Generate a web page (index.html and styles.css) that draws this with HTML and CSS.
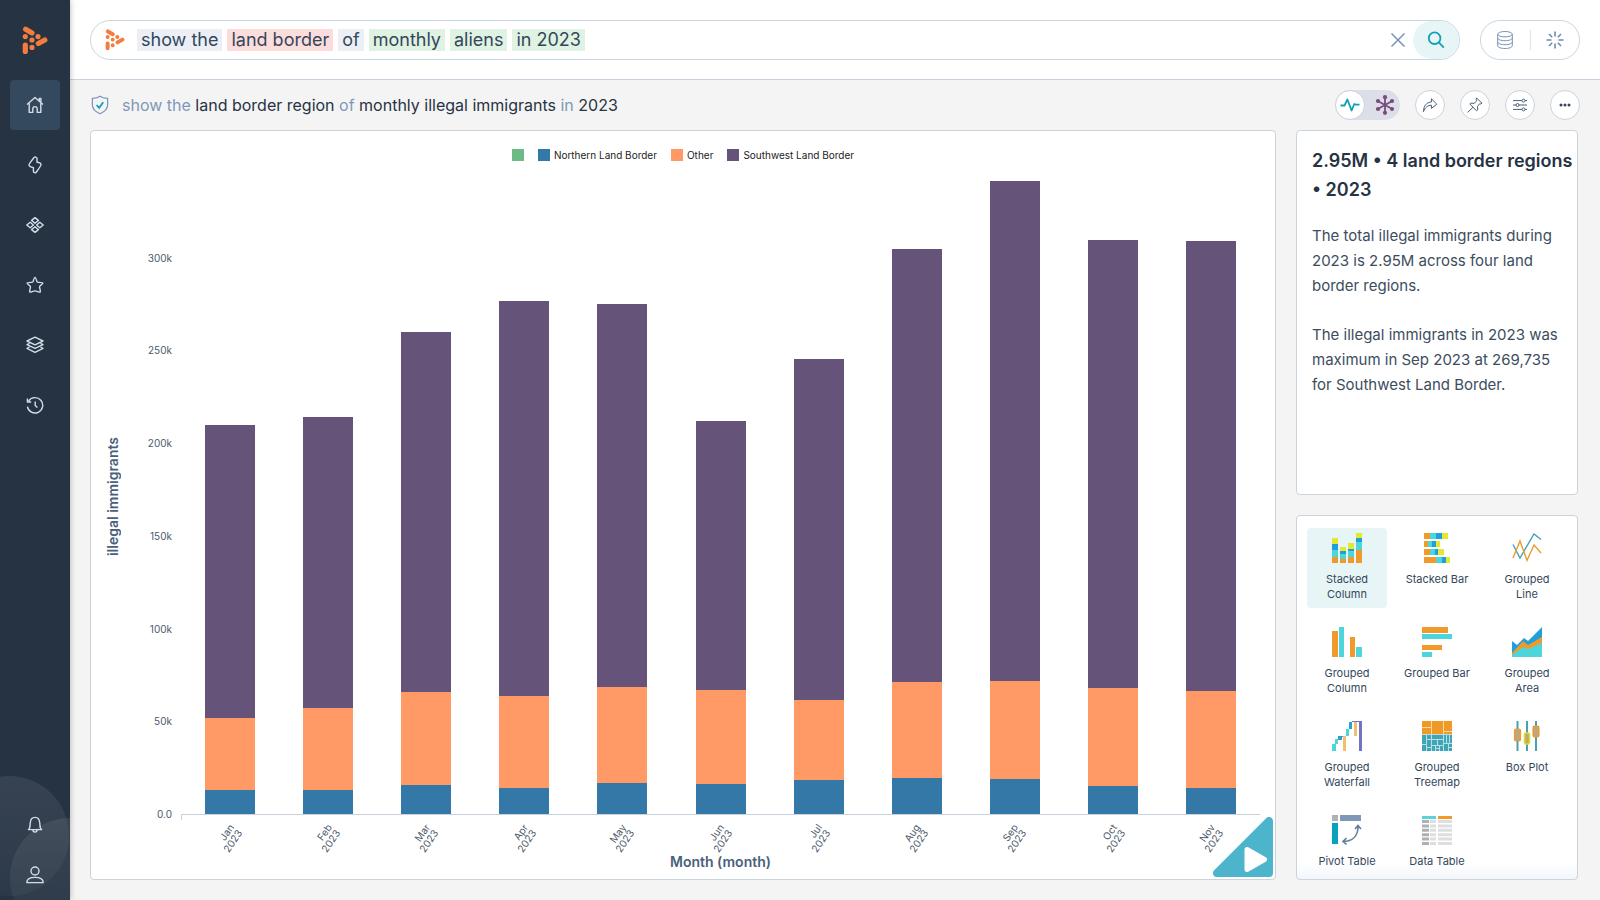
FILE: index.html
```html
<!DOCTYPE html>
<html lang="en">
<head>
<meta charset="utf-8">
<meta name="viewport" content="width=device-width, initial-scale=1">
<title>Monthly land border report</title>
<link rel="stylesheet" href="styles.css">
</head>
<body>
<svg class="defs" aria-hidden="true">
  <symbol id="logo" viewBox="0 0 26 29">
    <g stroke="#f47c3c" stroke-width="5.2" stroke-linecap="round" fill="none">
      <path d="M3.6 3.2 10 6.9M16.3 17.6 22.8 14M3.3 19.2v6.2"/>
      <path d="M3.3 10.6h.01M10 14h.01M16 10.6h.01M10 21.4h.01"/>
    </g>
  </symbol>
</svg>
<div class="app">
  <nav class="sidebar" aria-label="Main">
    <a class="brand" href="#" aria-label="Start"><svg width="26" height="29"><use href="#logo"/></svg></a>
    <a class="nav-item active" href="#" aria-label="Home"><svg class="line-icon" viewBox="0 0 18 18"><path d="M1 8.6 9 1.4l8 7.2M13.3 5V2.4h1.6v4M3.2 7.2v9.2h3.6v-3.6a2.2 2.2 0 0 1 4.4 0v3.6h3.6V7.2"/></svg></a>
    <a class="nav-item" href="#" aria-label="Insights"><svg class="line-icon" viewBox="0 0 18 18"><path d="M8 1.6C8.8.8 11 .8 11 2.6v3.600c2 .2 4.200 1 4 2.600-.1 1.200-3.400 5.600-4.600 7.200-.8 1.200-3 .8-3-.8v-3.600C5.200 11.200 3 10.400 3 9c.1-1.400 3.600-5.600 5-7.400z"/></svg></a>
    <a class="nav-item" href="#" aria-label="Boards"><svg class="line-icon" viewBox="0 0 18 18"><path d="M9 1.600 12.400 4.400 9 7.200 5.600 4.400zM9 10.800l3.400 2.800L9 16.400l-3.400-2.800zM4.200 6.200 7.400 9l-3.200 2.800L.8 9zM13.800 6.200 17.200 9l-3.400 2.800L10.600 9z"/></svg></a>
    <a class="nav-item" href="#" aria-label="Favourites"><svg class="line-icon" viewBox="0 0 18 18"><path d="M9 1.400c.5 0 .8.500 1.800 3.800.3.800.7 1 1.400 1.100 3.600.2 4.600.2 4.700.8.100.6-2.900 2.700-3.300 3.300-.5.700 1.200 4.600.8 5.600-.4.700-3.800-1.100-5.400-1.100S4 16.700 3.600 16c-.4-1 1.300-4.900.8-5.600-.4-.6-3.400-2.700-3.300-3.300.100-.6 1.100-.6 4.700-.8.700-.100 1.100-.3 1.400-1.100C8.200 1.900 8.500 1.400 9 1.400z"/></svg></a>
    <a class="nav-item" href="#" aria-label="Data"><svg class="line-icon" viewBox="0 0 18 18"><path d="M9 1.200 17 5 9 8.800 1 5zM3.500 7.300 1 8.600l8 3.800 8-3.800-2.500-1.300M3.500 11 1 12.400l8 4 8-4L14.500 11"/></svg></a>
    <a class="nav-item" href="#" aria-label="History"><svg class="line-icon" viewBox="0 0 18 18"><path d="M2.600 5A7.700 7.700 0 1 1 1.400 10.600M1.400 2.600V6h3.800M9.200 5.600v4l2.200 2"/></svg></a>
    <div class="nav-bottom">
      <a class="nav-item" href="#" aria-label="Notifications"><svg class="line-icon" viewBox="0 0 18 18"><path d="M2.400 13.600c1.800-1.200 1.600-3.600 1.800-6.400C4.400 4 6.200 1.400 9 1.400s4.600 2.600 4.800 5.800c.2 2.800 0 5.200 1.800 6.400zM7 14c0 2.800 4 2.800 4 0"/></svg></a>
      <a class="nav-item" href="#" aria-label="Profile"><svg class="line-icon" viewBox="0 0 18 18"><circle cx="9" cy="5" r="4"/><path d="M.8 16.600c0-3.400 2.600-5.200 8.200-5.200s8.200 1.800 8.200 5.200z"/></svg></a>
    </div>
  </nav>

  <div class="page">
    <header class="header">
      <form class="search">
        <svg class="search-logo" width="20" height="22"><use href="#logo"/></svg>
        <div class="tokens">
          <span class="token">show the</span>
          <span class="token attribute">land border</span>
          <span class="token">of</span>
          <span class="token measure">monthly</span>
          <span class="token measure">aliens</span>
          <span class="token measure">in 2023</span>
        </div>
        <input class="search-input" type="text" aria-label="Search query">
        <button class="clear" type="button" aria-label="Clear"><svg width="16" height="16" viewBox="0 0 16 16"><path d="M1.500 1.500l13 13M14.500 1.500l-13 13" stroke="#7a93b5" stroke-width="1.500"/></svg></button>
        <button class="go" type="submit" aria-label="Search"><svg width="18" height="18" viewBox="0 0 18 18" fill="none" stroke="#109fb5" stroke-width="1.800"><circle cx="7.600" cy="7.200" r="5.800"/><path d="M11.800 11.400l5 5.200"/></svg></button>
      </form>
      <div class="header-tools">
        <button type="button" aria-label="Data source"><svg width="16" height="18" viewBox="0 0 16 18" fill="none" stroke="#7a93b5"><ellipse cx="8" cy="3.200" rx="7.300" ry="2.700"/><path d="M.7 3.200v11.600c0 1.500 3.200 2.700 7.300 2.700s7.300-1.200 7.300-2.700V3.200M.7 7c0 1.500 3.200 2.700 7.300 2.700S15.300 8.500 15.300 7M.7 11c0 1.500 3.200 2.700 7.300 2.700s7.300-1.200 7.300-2.700"/></svg></button>
        <button type="button" aria-label="Suggestions"><svg width="18" height="18" viewBox="0 0 18 18" stroke="#6f8bae" stroke-width="1.600"><path d="M9 .500v5M9 12.500v5M.500 9h5M12.500 9h5M3 3l3.200 3.200M11.800 11.800 15 15M15 3l-3.200 3.200M6.200 11.800 3 15"/></svg></button>
      </div>
    </header>

    <div class="toolbar">
      <svg width="18" height="20" viewBox="0 0 18 20" fill="none"><path d="M9 1.200c2.200 1.600 4.800 2 7.600 2.200v6.400c0 4.400-3.200 7.200-7.600 9-4.400-1.800-7.600-4.600-7.600-9V3.400C4.200 3.200 6.800 2.800 9 1.200z" stroke="#7a93b5" stroke-width="1.200"/><path d="M5.600 10l2.600 2.800 4-5.600" stroke="#109fb5" stroke-width="1.800"/></svg>
      <h1 class="question"><span>show the</span> land border region <span>of</span> monthly illegal immigrants <span>in</span> 2023</h1>
      <div class="actions">
        <div class="toggle">
          <button class="round" type="button" aria-label="Summary view"><svg width="20" height="14" viewBox="0 0 20 14" fill="none" stroke="#109fb5" stroke-width="1.800" stroke-linejoin="round"><path d="M.500 7.500h4L7.400 1.500l4.200 11L14.300 6l1 .600h4.200"/></svg></button>
          <button class="alt" type="button" aria-label="Network view"><svg width="20" height="20" viewBox="0 0 20 20" stroke="#7a4b7e" fill="#7a4b7e" stroke-width="1.800"><path d="M10 2v16M2.800 6l14.400 8M17.200 6 2.800 14"/><g stroke="none"><circle cx="10" cy="2.200" r="2.100"/><circle cx="10" cy="17.800" r="2.100"/><circle cx="3" cy="6" r="2.100"/><circle cx="17" cy="6" r="2.100"/><circle cx="3" cy="14" r="2.100"/><circle cx="17" cy="14" r="2.100"/></g></svg></button>
        </div>
        <button class="round" type="button" aria-label="Share"><svg class="tool-icon" viewBox="0 0 16 16"><path d="M1.400 14.600C1.600 9 4.400 5.200 9.400 5V1.800l5.400 5.400-5.400 4.200V8.200C5.800 8.200 3.200 10.400 1.400 14.600z"/></svg></button>
        <button class="round" type="button" aria-label="Pin"><svg class="tool-icon" viewBox="0 0 16 16"><path d="M9.600 1l5.400 5.200-1.600.8-.600-.400-2.400 3 .4 3.200-1.200 1L2.800 7l1-1 3.200.4 2.800-2.600-.6-1.200zM6 10.200.600 15.400"/></svg></button>
        <button class="round" type="button" aria-label="Settings"><svg class="tool-icon" viewBox="0 0 16 16"><path d="M1 3.600h9M13 3.600h2M1 8h3M7 8h8M1 12.400h9M13 12.400h2"/><circle cx="11.500" cy="3.600" r="1.500"/><circle cx="5.500" cy="8" r="1.500"/><circle cx="11.500" cy="12.400" r="1.500"/></svg></button>
        <button class="round" type="button" aria-label="More"><svg width="12" height="4" viewBox="0 0 12 4" fill="#33475b"><circle cx="2" cy="2" r="1.500"/><circle cx="6" cy="2" r="1.500"/><circle cx="10" cy="2" r="1.500"/></svg></button>
      </div>
    </div>

    <main class="content">
      <section class="card chart" aria-label="Illegal immigrants by month">
        <ul class="legend">
          <li class="key-blank"></li>
          <li class="key-north">Northern Land Border</li>
          <li class="key-other">Other</li>
          <li class="key-south">Southwest Land Border</li>
        </ul>
        <div class="y-title">illegal immigrants</div>
        <div class="y-axis">
          <span></span><span>300k</span><span>250k</span><span>200k</span><span>150k</span><span>100k</span><span>50k</span>
        </div>
        <div class="y-zero">0.0</div>
        <div class="plot">
          <div class="bar"><i class="south" style="--v:157.7"></i><i class="other" style="--v:38.9"></i><i class="north" style="--v:13"></i></div>
          <div class="bar"><i class="south" style="--v:156.6"></i><i class="other" style="--v:44.3"></i><i class="north" style="--v:13"></i></div>
          <div class="bar"><i class="south" style="--v:193.8"></i><i class="other" style="--v:50.2"></i><i class="north" style="--v:15.7"></i></div>
          <div class="bar"><i class="south" style="--v:212.7"></i><i class="other" style="--v:49.7"></i><i class="north" style="--v:14"></i></div>
          <div class="bar"><i class="south" style="--v:206.8"></i><i class="other" style="--v:51.8"></i><i class="north" style="--v:16.7"></i></div>
          <div class="bar"><i class="south" style="--v:144.7"></i><i class="other" style="--v:50.8"></i><i class="north" style="--v:16.2"></i></div>
          <div class="bar"><i class="south" style="--v:183.6"></i><i class="other" style="--v:43.2"></i><i class="north" style="--v:18.4"></i></div>
          <div class="bar"><i class="south" style="--v:233.3"></i><i class="other" style="--v:51.8"></i><i class="north" style="--v:19.4"></i></div>
          <div class="bar"><i class="south" style="--v:269.7"></i><i class="other" style="--v:52.9"></i><i class="north" style="--v:18.9"></i></div>
          <div class="bar"><i class="south" style="--v:241.4"></i><i class="other" style="--v:52.9"></i><i class="north" style="--v:15.1"></i></div>
          <div class="bar"><i class="south" style="--v:242.4"></i><i class="other" style="--v:52.4"></i><i class="north" style="--v:14"></i></div>
        </div>
        <div class="x-axis">
          <div><span>Jan<br>2023</span></div><div><span>Feb<br>2023</span></div><div><span>Mar<br>2023</span></div><div><span>Apr<br>2023</span></div><div><span>May<br>2023</span></div><div><span>Jun<br>2023</span></div><div><span>Jul<br>2023</span></div><div><span>Aug<br>2023</span></div><div><span>Sep<br>2023</span></div><div><span>Oct<br>2023</span></div><div><span>Nov<br>2023</span></div>
        </div>
        <div class="x-title">Month (month)</div>
        <button class="play" type="button" aria-label="Play"><svg width="60" height="60" viewBox="0 0 60 60"><path d="M4 56 56 4v52z" fill="#4cb5cb" stroke="#4cb5cb" stroke-width="8" stroke-linejoin="round"/><path d="M34 32.500 51.500 42.500 34 52.500z" fill="#fff" stroke="#fff" stroke-width="5" stroke-linejoin="round"/></svg></button>
      </section>

      <aside class="side">
        <section class="card summary">
          <h2>2.95M • 4 land border regions • 2023</h2>
          <p>The total illegal immigrants during 2023 is 2.95M across four land border regions.</p>
          <p>The illegal immigrants in 2023 was maximum in Sep 2023 at 269,735 for Southwest Land Border.</p>
        </section>
        <section class="card types" aria-label="Chart types">
          <button class="type selected" type="button"><svg viewBox="0 0 30 30"><path fill="#ef9a2b" d="M0 24h6v6H0zM8 26h6v4H8zM16 24h6v6h-6zM24 17h6v13h-6z"/><path fill="#4cd6db" d="M0 17h6v7H0zM8 21h6v5H8zM16 18h6v6h-6zM24 9h6v8h-6z"/><path fill="#1f9fdb" d="M0 11h6v6H0zM8 18h6v3H8zM16 16h6v2h-6zM24 5h6v4h-6z"/><path fill="#e4e92d" d="M0 5h6v6H0zM8 14h6v4H8zM16 10h6v6h-6zM24 0h6v5h-6z"/></svg><span>Stacked Column</span></button>
          <button class="type" type="button"><svg viewBox="0 0 30 30"><path fill="#ef9a2b" d="M2 0h6v6H2zM2 8h4v6H2zM2 16h6v6H2zM2 24h12v6H2z"/><path fill="#4cd6db" d="M8 0h6v6H8zM6 8h4v6H6zM8 16h5v6H8zM14 24h6v6h-6z"/><path fill="#1f9fdb" d="M14 0h6v6h-6zM10 8h4v6h-4zM13 16h3v6h-3zM20 24h4v6h-4z"/><path fill="#e4e92d" d="M20 0h6v6h-6zM14 8h4v6h-4zM16 16h6v6h-6zM24 24h4v6h-4z"/></svg><span>Stacked Bar</span></button>
          <button class="type" type="button"><svg viewBox="0 0 30 30" fill="none" stroke-width="1.400"><path stroke="#45a3b8" d="M1 11.500 8 25 22 1l7 5.500"/><path stroke="#ef9a2b" d="M1 25 8 8l7 19.500 7-15.500 7 8"/></svg><span>Grouped Line</span></button>
          <button class="type" type="button"><svg viewBox="0 0 30 30"><path fill="#ef9a2b" d="M0 4h6v26H0zM18 10h5v20h-5z"/><path fill="#4cd6db" d="M7 0h5v30H7zM24 20h6v10h-6z"/></svg><span>Grouped Column</span></button>
          <button class="type" type="button"><svg viewBox="0 0 30 30"><path fill="#ef9a2b" d="M0 0h26v6H0zM0 18h20v5H0z"/><path fill="#4cd6db" d="M0 7h30v5H0zM0 25h10v5H0z"/></svg><span>Grouped Bar</span></button>
          <button class="type" type="button"><svg viewBox="0 0 30 30"><path fill="#1f9fdb" d="M0 14l5 4 7-7 4 3L30 0v30H0z"/><path fill="#ef9a2b" d="M0 26l11-12 5 4 14-8v20H0z"/><path fill="#4cd6db" d="M0 28l11-8 5 2 14-6v14H0z"/></svg><span>Grouped Area</span></button>
          <button class="type" type="button"><svg viewBox="0 0 30 30"><path fill="#4cd6db" d="M0 23h4v7H0zM3 18h3v5H3zM14 8h3v7h-3z"/><path fill="#2f9fd0" d="M6 15h4v4H6zM17 1h3v7h-3zM9 15h4v1H9z"/><path fill="#f0c070" d="M11 15h3v15h-3zM22 1h3v14h-3z"/><path fill="#6f74c8" d="M27 0h3v30h-3zM20 0h7v1h-7z"/></svg><span>Grouped Waterfall</span></button>
          <button class="type" type="button"><svg viewBox="0 0 30 30"><path fill="#b9dfe4" d="M0 13h30v17H0z"/><path fill="#fbd9a6" d="M0 0h30v13H0z"/><path fill="#f09a25" d="M0 0h9v6H0zM0 7h9v6H0zM10 0h11v13H10zM22 0h8v10h-8zM22 11h8v2h-8z"/><path fill="#3fa6b8" d="M0 14h4v9H0zM5 14h4v4H5zM10 14h11v4H10zM22 14h2v8h-2zM25 14h2v8h-2zM28 14h2v8h-2zM0 24h4v6H0zM5 19h4v7H5zM5 27h4v3H5zM10 19h5v5h-5zM16 19h5v5h-5zM10 25h3v5h-3zM14 25h3v2h-3zM14 28h3v2h-3zM18 25h3v5h-3zM22 23h4v7h-4zM27 23h3v3h-3zM27 27h3v3h-3z"/></svg><span>Grouped Treemap</span></button>
          <button class="type" type="button"><svg viewBox="0 0 30 30"><path d="M5.500 0v30M15 0v30M24 0v30" stroke="#45a3b0" stroke-width="2"/><g fill="#c0a678" stroke-width="1.200"><rect x="2.500" y="8" width="6" height="12" rx="1.500" stroke="#ef9a2b"/><rect x="12.500" y="12" width="5" height="11" rx="1.500" stroke="#d5e02d" stroke-width="1.600"/><rect x="21" y="5" width="6" height="11" rx="1.500" stroke="#ef9a2b"/></g></svg><span>Box Plot</span></button>
          <button class="type" type="button"><svg viewBox="0 0 30 30"><path fill="#b0b3b5" d="M0 0h6v6H0z"/><path fill="#7f98b8" d="M8 0h21v6H8z"/><path fill="#06a3bb" d="M0 8h6v21H0z"/><path d="M11 26.500c9 0 15-5 15-15M14.500 23 11 26.500l3.500 2.800M23 14l3-3.500 3 3.500" fill="none" stroke="#5f7d9c" stroke-width="1.600"/></svg><span>Pivot Table</span></button>
          <button class="type" type="button"><svg viewBox="0 0 30 30"><path fill="#5cd3d8" d="M0 1h14v3H0z"/><path fill="#ef9a2b" d="M16 1h14v3H16z"/><path d="M0 6.500h7M0 10.900h7M0 15.300h7M0 19.700h7M0 24.100h7M0 28.500h7" stroke="#aeb0b1" stroke-width="3"/><path d="M8 6.500h6M8 10.900h6M8 15.300h6M8 19.700h6M8 24.100h6M8 28.500h6M16 6.500h14M16 10.900h14M16 15.300h14M16 19.700h14M16 24.100h14M16 28.500h14" stroke="#dcdedf" stroke-width="3"/></svg><span>Data Table</span></button>
        </section>
      </aside>
    </main>
  </div>
</div>
</body>
</html>
```

FILE: styles.css
```css
* { box-sizing: border-box; }
body { margin: 0; background: #f4f4f4; color: #33475b; font-family: Inter, "Liberation Sans", sans-serif; }
button { display: flex; align-items: center; justify-content: center; margin: 0; padding: 0; border: 0; background: none; color: inherit; font: inherit; cursor: pointer; }
svg { display: block; flex: none; }
.defs { position: absolute; width: 0; height: 0; }
.app { display: flex; min-height: 100vh; }

/* Sidebar */
.sidebar { position: relative; z-index: 1; display: flex; flex: none; flex-direction: column; align-items: center; gap: 10px; width: 70px; overflow: hidden; background: #263343; box-shadow: 0 0 6px rgba(0, 0, 0, .3); }
.sidebar::before, .sidebar::after { content: ""; position: absolute; z-index: -1; width: 120px; height: 120px; border-radius: 50%; background: linear-gradient(rgba(255, 255, 255, .08), rgba(255, 255, 255, .03)); }
.sidebar::before { left: -51px; bottom: 4px; }
.sidebar::after { left: 10px; bottom: -38px; }
.brand { display: flex; align-items: center; justify-content: center; width: 50px; height: 70px; padding-top: 10px; }
.nav-item { display: flex; align-items: center; justify-content: center; width: 50px; height: 50px; border-radius: 4px; }
.nav-item.active { background: #34495d; }
.nav-bottom { margin-top: auto; }
.line-icon { width: 18px; height: 18px; fill: none; stroke: #d3dde7; stroke-width: 1.4; stroke-linejoin: round; }

/* Header */
.page { display: flex; flex: 1; flex-direction: column; min-width: 0; }
.header { display: flex; gap: 20px; padding: 20px 20px 19px; border-bottom: 1px solid #c9d3de; background: #fff; }
.search { display: flex; flex: 1; align-items: center; height: 40px; padding-left: 14px; overflow: hidden; border: 1px solid #c9d6e0; border-radius: 20px; }
.tokens { display: flex; gap: 5px; margin-left: 12px; font-size: 18px; line-height: 22px; white-space: nowrap; }
.token { padding: 0 4px; background: #ecf0f6; }
.token.attribute { background: #fddcdc; }
.token.measure { background: #e0f3e2; }
.search-input { flex: 1; min-width: 0; height: 100%; border: 0; outline: 0; background: none; font: inherit; font-size: 18px; }
.clear { width: 30px; height: 38px; }
.go { width: 46px; height: 38px; border-radius: 20px; background: #e8f5f7; }
.header-tools { display: flex; align-items: center; width: 100px; height: 40px; border: 1px solid #c9d6e0; border-radius: 20px; }
.header-tools button { flex: 1; height: 20px; }
.header-tools button + button { border-left: 1px solid #dde3ea; }

/* Toolbar */
.toolbar { display: flex; align-items: center; gap: 13px; height: 50px; padding: 0 20px 0 21px; }
.question { flex: 1; margin: 0; font-size: 16px; font-weight: 400; line-height: 20px; color: #263343; }
.question span { color: #7f98b8; }
.actions { display: flex; gap: 15px; }
.round { width: 30px; height: 30px; border: 1px solid #c9d3de; border-radius: 50%; background: #fff; }
.toggle { display: flex; width: 65px; border-radius: 15px; background: #dcdfe8; }
.alt { flex: 1; padding-left: 5px; }
.tool-icon { width: 16px; height: 16px; fill: none; stroke: #4a5f75; stroke-linejoin: round; }

/* Content */
.content { display: grid; flex: 1; grid-template-columns: 1fr 282px; gap: 20px; padding: 0 22px 20px 20px; }
.card { border: 1px solid #cbd3dd; border-radius: 4px; background: #fff; }

/* Chart */
.chart { position: relative; display: grid; grid-template-columns: 44px 46px 1fr; grid-template-rows: 34px 1fr 39px 18px; padding: 0 15px 8px 0; }
.legend { display: flex; grid-column: 1 / -1; align-items: center; justify-content: center; gap: 14px; margin: 0; padding: 13px 0 0 15px; list-style: none; font-size: 10px; line-height: 12px; color: #222; }
.legend li { display: flex; gap: 4px; }
.legend li::before { content: ""; width: 12px; height: 12px; background: var(--key); }
.key-blank { --key: #6dba87; }
.key-north { --key: #3478a8; }
.key-other { --key: #ff9a66; }
.key-south { --key: #65537a; }
.y-title { grid-row: 2; grid-column: 1; place-self: center; writing-mode: vertical-rl; transform: rotate(180deg); padding-bottom: 14px; font-size: 14px; font-weight: 600; line-height: 18px; color: #48617b; }
.y-axis { display: flex; grid-row: 2; grid-column: 2; flex-direction: column; }
.y-axis, .y-zero { padding-right: 9px; font-size: 10px; line-height: 14px; text-align: right; color: #4d5b6b; }
.y-axis span { flex: 1; transform: translateY(-7px); }
.y-zero { grid-row: 3; grid-column: 2; margin-top: -7px; }
.plot { display: flex; grid-row: 2; grid-column: 3; }
.bar { display: flex; flex: 1; flex-direction: column; align-items: center; justify-content: flex-end; }
.bar i { width: 51%; height: calc(var(--v) / 350 * 100%); }
.south { background: #65537a; }
.other { background: #ff9a66; }
.north { background: #3478a8; }
.x-axis { display: flex; grid-row: 3; grid-column: 3; border-top: 1px solid #c9d3de; background: linear-gradient(#c9d3de, #c9d3de) no-repeat 0 0 / 1px 5px; }
.x-axis div { display: flex; flex: 1; align-items: center; justify-content: center; padding: 8px 4px 0 0; }
.x-axis span { transform: rotate(-55deg); font-size: 10px; line-height: 10px; text-align: right; color: #4d5b6b; }
.x-title { grid-row: 4; grid-column: 3; font-size: 14px; font-weight: 600; line-height: 18px; text-align: center; color: #48617b; }
.play { position: absolute; right: 2px; bottom: 2px; }

/* Side panels */
.side { display: grid; grid-template-rows: 1fr 1fr; gap: 20px; }
.summary { padding: 15px 2px 12px 15px; }
.summary h2 { margin: 0 0 19px; font-size: 18px; font-weight: 600; line-height: 29px; color: #263343; }
.summary p { margin: 0 6px 24px 0; font-size: 15px; line-height: 25px; color: #3c4d5e; }
.types { display: grid; grid-template-columns: repeat(3, 80px); grid-template-rows: repeat(3, 80px) auto; align-content: start; justify-content: space-between; row-gap: 14px; padding: 12px 10px 8px; background: linear-gradient(#fff 95%, #f3f6fa); }
.type { flex-direction: column; justify-content: flex-start; gap: 9px; padding: 5px 6px 0; border-radius: 4px; font-size: 11px; line-height: 15px; color: #33475b; }
.type.selected { background: #e8f5f7; }
.type svg { width: 30px; height: 30px; }
```
